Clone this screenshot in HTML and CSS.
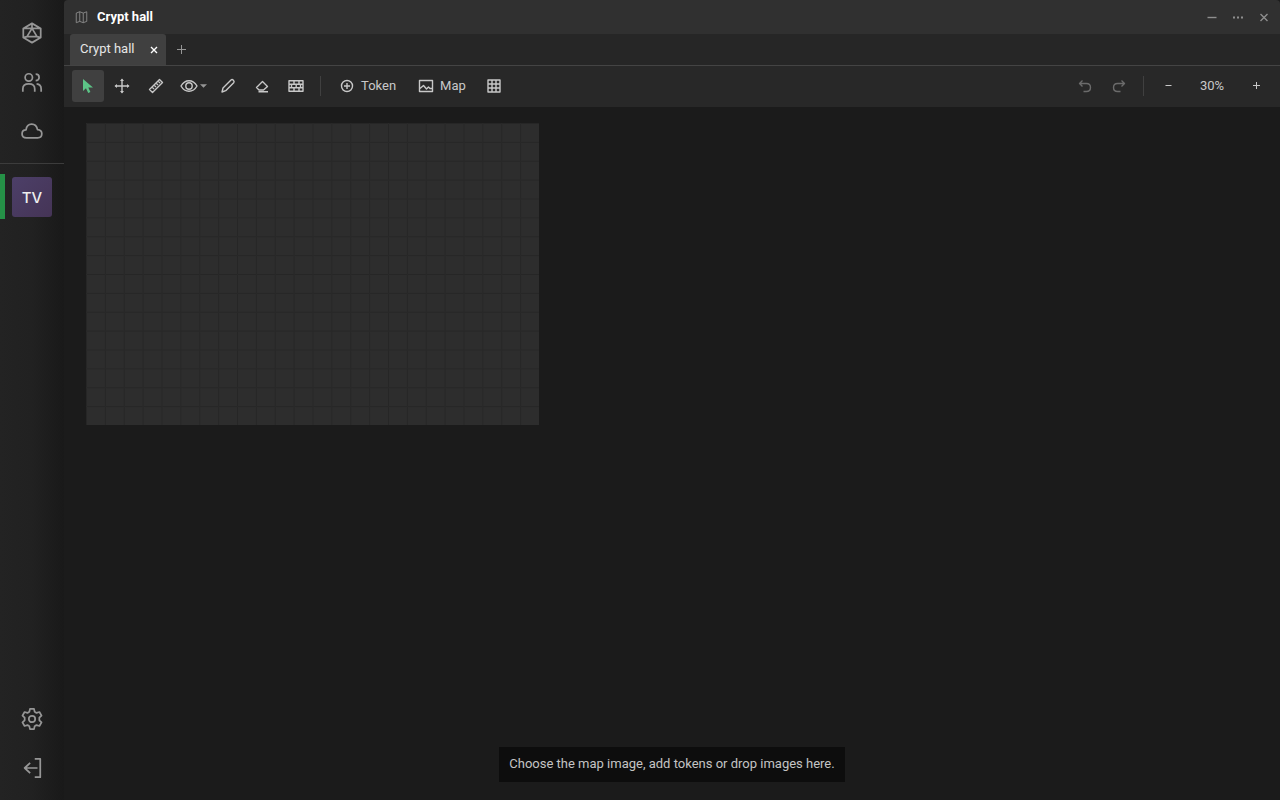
FILE: index.html
```html
<!DOCTYPE html>
<html lang="en">
<head>
<meta charset="utf-8">
<title>Crypt hall</title>
<link rel="stylesheet" href="styles.css">
</head>
<body>
<div class="app">
  <nav class="rail" aria-label="Main">
    <button class="rail-btn" aria-label="Dice"><svg class="icon-lg" viewBox="0 0 24 24"><path d="M12 1.500 21.500 7v10L12 22.500 2.500 17V7ZM12 1.500V7M12 7 6.500 16h11ZM2.500 7 12 7h9.500M2.500 17l4-1M21.500 17l-4-1"/></svg></button>
    <button class="rail-btn" aria-label="Players"><svg class="icon-lg" viewBox="0 0 24 24"><circle cx="8.500" cy="7" r="4"/><path d="M2 22.500v-3c0-3.500 2.500-5.500 6.500-5.500s6.500 2 6.500 5.500v3M16 3.500c5 0 5 7 0 7M17 14c3 .3 5 2 5 5.500v3"/></svg></button>
    <button class="rail-btn" aria-label="Library"><svg class="icon-lg" viewBox="0 0 24 24"><path d="M6 19.500C-.5 19.500-.2 11 5.500 10.800 6.500 2.500 16.500 2.500 18 10.500c6.500.3 6 9 .2 9Z"/></svg></button>
    <div class="world"><button class="avatar">TV</button></div>
    <div class="rail-end">
      <button class="rail-btn" aria-label="Settings"><svg class="icon-lg" viewBox="0 0 24 24"><circle cx="12" cy="12" r="3.500"/><path d="M9.800 1h4.400l.7 3.200 2 1.200 3.200-1 2.300 3.900-2.400 2.300v2.800l2.400 2.300-2.300 3.900-3.200-1-2 1.200-.7 3.200H9.800l-.7-3.200-2-1.200-3.200 1-2.300-3.900L4 13.400v-2.800L1.600 8.300l2.300-3.900 3.200 1 2-1.200Z"/></svg></button>
      <button class="rail-btn" aria-label="Leave"><svg class="icon-lg" viewBox="0 0 24 24"><path d="M15 2h6v20h-6M18 12H4M10 6.500 4 12l6 5.500"/></svg></button>
    </div>
  </nav>
  <main class="window">
    <header class="titlebar">
      <svg class="icon-sm" viewBox="0 0 16 16"><path d="M2 3.500 6 2l4 1.500L14 2v11l-4 1.500L6 13l-4 1.500ZM6 2v11M10 3.500v11"/></svg>
      <h1 class="title">Crypt hall</h1>
      <div class="win-actions">
        <button class="win-btn" aria-label="Minimize"><svg class="icon" viewBox="0 0 16 16"><path d="M3.500 8.500h9"/></svg></button>
        <button class="win-btn" aria-label="More"><svg class="icon solid" viewBox="0 0 16 16"><path d="M3 7.500h2v2H3zM7 7.500h2v2H7zM11 7.500h2v2h-2z"/></svg></button>
        <button class="win-btn" aria-label="Close"><svg class="icon" viewBox="0 0 16 16"><path d="m4.500 5 7 7m0-7-7 7"/></svg></button>
      </div>
    </header>
    <div class="tabs">
      <div class="tab"><button class="tab-name">Crypt hall</button><button class="tab-close" aria-label="Close tab"><svg class="icon" viewBox="0 0 16 16"><path d="m5 5 6 6m0-6-6 6"/></svg></button></div>
      <button class="tab-add" aria-label="New tab"><svg class="icon" viewBox="0 0 16 16"><path d="M8.500 4v9M4 8.500h9"/></svg></button>
    </div>
    <div class="toolbar">
      <button class="tool active" aria-label="Select"><svg class="icon solid" viewBox="0 0 16 16"><path d="M3 1v12l3-2.700L8.200 15l2.200-1-2.100-4.400L13 9.500Z"/></svg></button>
      <button class="tool" aria-label="Move"><svg class="icon" viewBox="0 0 16 16"><path d="M8 1.500v13M1.500 8h13"/><path class="fill" d="M8 .5 10 3H6ZM8 15.500 6 13h4ZM.5 8 3 6v4ZM15.500 8 13 10V6Z"/></svg></button>
      <button class="tool" aria-label="Measure"><svg class="icon" viewBox="0 0 16 16"><path d="m1.500 11.500 10-10 3 3-10 10ZM4 9l2 2M6 7l2 2M8 5l2 2M10 3l2 2"/></svg></button>
      <button class="tool wide" aria-label="Visibility"><svg class="eye" viewBox="0 0 18 16"><path d="M1 8c4-7 12-7 16 0-4 7-12 7-16 0Z"/><circle cx="9" cy="8" r="3.200"/></svg><svg class="caret" viewBox="0 0 8 4"><path d="M0 0h8L4 4Z"/></svg></button>
      <button class="tool" aria-label="Draw"><svg class="icon" viewBox="0 0 16 16"><path d="m2 14 1-4 8-8c1.500-1.200 4 1 2.700 2.700l-8 8Z"/></svg></button>
      <button class="tool" aria-label="Erase"><svg class="icon" viewBox="0 0 16 16"><path d="m2.500 9.500 6-6 5 5L9.500 12h-4.500ZM4.500 13.800H14"/></svg></button>
      <button class="tool" aria-label="Walls"><svg class="icon" viewBox="0 0 16 16"><path d="M1 2.700h14v10.600H1ZM1 6.200h14M1 9.800h14M6 2.700v3.500M11 2.700v3.500M3.500 6.200v3.600M8.200 6.200v3.600M12.500 6.200v3.600M6 9.800v3.500M11 9.800v3.500"/></svg></button>
      <span class="sep"></span>
      <button class="tool labelled"><svg class="icon" viewBox="0 0 16 16"><circle cx="8" cy="8" r="5.500"/><path d="M8 5v6M5 8h6"/></svg>Token</button>
      <button class="tool labelled"><svg class="icon" viewBox="0 0 16 16"><path d="M1.500 2.500h13v11h-13ZM2 10.500l3.500-3 3 3.500 2-2 1.500 1.500h2"/></svg>Map</button>
      <button class="tool" aria-label="Grid"><svg class="icon" viewBox="0 0 16 16"><path d="M2 2h12v12H2ZM2 6h12M2 10h12M6 2v12M10 2v12"/></svg></button>
      <div class="tools-end">
        <button class="tool dim" aria-label="Undo"><svg class="icon" viewBox="0 0 16 16"><path d="M5.500 2.500 2.500 5.500l3 3M2.500 5.500h7c5.300 0 5.300 8 0 8H6.500"/></svg></button>
        <button class="tool dim" aria-label="Redo"><svg class="icon" viewBox="0 0 16 16"><path d="m10.500 2.500 3 3-3 3M13.500 5.500h-7c-5.300 0-5.300 8 0 8h3"/></svg></button>
        <span class="sep"></span>
        <button class="tool" aria-label="Zoom out"><svg class="icon slim" viewBox="0 0 16 16"><path d="M5.500 7.500h6"/></svg></button>
        <output class="zoom">30%</output>
        <button class="tool" aria-label="Zoom in"><svg class="icon slim" viewBox="0 0 16 16"><path d="M8.500 4v7M5 7.500h7"/></svg></button>
      </div>
    </div>
    <section class="canvas">
      <svg class="board" viewBox="0 0 2400 1600" aria-label="Map grid">
        <defs><pattern id="cell" width="100" height="100" patternUnits="userSpaceOnUse"><path class="cell-line" d="M100 3H3V100"/></pattern></defs>
        <rect class="board-bg" width="2400" height="1600"/>
        <rect class="board-grid" width="2400" height="1600" fill="url(#cell)"/>
      </svg>
      <p class="tip">Choose the map image, add tokens or drop images here.</p>
    </section>
  </main>
</div>
</body>
</html>
```
FILE: styles.css
```css
* { box-sizing: border-box; }
body {
  margin: 0;
  background: #1b1b1b;
  color: #c8c8c8;
  font: 13px/20px Roboto, sans-serif;
}
button {
  display: flex;
  align-items: center;
  justify-content: center;
  padding: 0;
  border: 0;
  background: none;
  color: inherit;
  font: inherit;
}
svg {
  display: block;
  flex: none;
  fill: none;
  stroke: currentColor;
  stroke-width: 1.4;
  stroke-linejoin: round;
}
.app { display: flex; min-height: 100vh; }

.rail {
  display: flex;
  flex-direction: column;
  width: 64px;
  padding-top: 8px;
  background: linear-gradient(to right, #232323, #212121 50%, #191919);
  color: #969696;
}
.rail-btn { width: 64px; height: 49px; }
.icon-lg { width: 22px; height: 22px; stroke-width: 1.9; }
.world {
  display: flex;
  margin-top: 8px;
  padding-top: 10px;
  border-top: 1px solid #3c3c3c;
}
.world::before {
  content: "";
  width: 5px;
  height: 45px;
  background: #259147;
}
.avatar {
  width: 40px;
  height: 40px;
  margin: 3px 0 0 7px;
  padding-top: 1px;
  border-radius: 3px;
  background: linear-gradient(135deg, #4c3f68, #453456);
  color: #eeeeee;
  font-family: Inter, sans-serif;
  font-size: 15px;
  font-weight: 500;
}
.rail-end { margin-top: auto; padding-bottom: 8px; }

.window { display: flex; flex: 1; flex-direction: column; min-width: 0; }
.titlebar {
  display: flex;
  align-items: center;
  gap: 8px;
  height: 34px;
  padding: 0 4px 0 10px;
  border-radius: 4px 4px 0 0;
  background: #303030;
  color: #8e8e8e;
}
.title { margin: 0; color: #ffffff; font-size: 13px; font-weight: 700; }
.icon-sm { width: 15px; height: 14px; stroke-width: 1; }
.icon { width: 16px; height: 16px; }
.solid, .fill { fill: currentColor; stroke: none; }
.slim { stroke-width: 1; }
.win-actions { display: flex; gap: 2px; margin-left: auto; }
.win-btn { width: 24px; height: 32px; }

.tabs {
  display: flex;
  height: 32px;
  padding-left: 6px;
  border-bottom: 1px solid #444444;
  background: #262626;
}
.tab {
  display: flex;
  align-items: center;
  padding-left: 10px;
  border-radius: 3px 3px 0 0;
  background: #404040;
  color: #e6e6e6;
}
.tab-name { padding-bottom: 2px; }
.tab-close { width: 24px; height: 31px; margin-left: 8px; color: #ffffff; }
.tab-add { width: 30px; padding-bottom: 2px; color: #969696; }
.tab-add .icon { stroke-width: 1; }

.toolbar {
  display: flex;
  align-items: center;
  gap: 2px;
  height: 41px;
  padding: 0 8px 1px;
  background: #282828;
}
.tool { width: 32px; height: 32px; border-radius: 3px; }
.active { background: #404040; color: #5cc486; }
.wide { gap: 2px; width: 36px; padding-left: 2px; }
.eye { width: 18px; height: 16px; }
.caret { width: 7px; height: 4px; fill: #969696; stroke: none; }
.labelled { gap: 6px; width: auto; padding: 0 10px; }
.dim { color: #6b6b6b; }
.sep { width: 1px; height: 20px; margin: 0 6px; background: #404040; }
.tools-end { display: flex; align-items: center; gap: 2px; margin-left: auto; }
.zoom { width: 52px; text-align: center; }

.canvas {
  display: flex;
  flex: 1;
  flex-direction: column;
  align-items: center;
  padding: 16px 22px 18px;
}
.board { align-self: flex-start; width: 453px; max-width: 100%; }
.board-bg { fill: #2d2d2d; stroke: none; }
.board-grid { stroke: none; }
.cell-line { stroke: #252525; stroke-width: 5; }
.tip {
  margin: auto 0 0;
  padding: 7px 10px 8px;
  background: #0d0d0d;
  color: #c4c4c4;
}
```
